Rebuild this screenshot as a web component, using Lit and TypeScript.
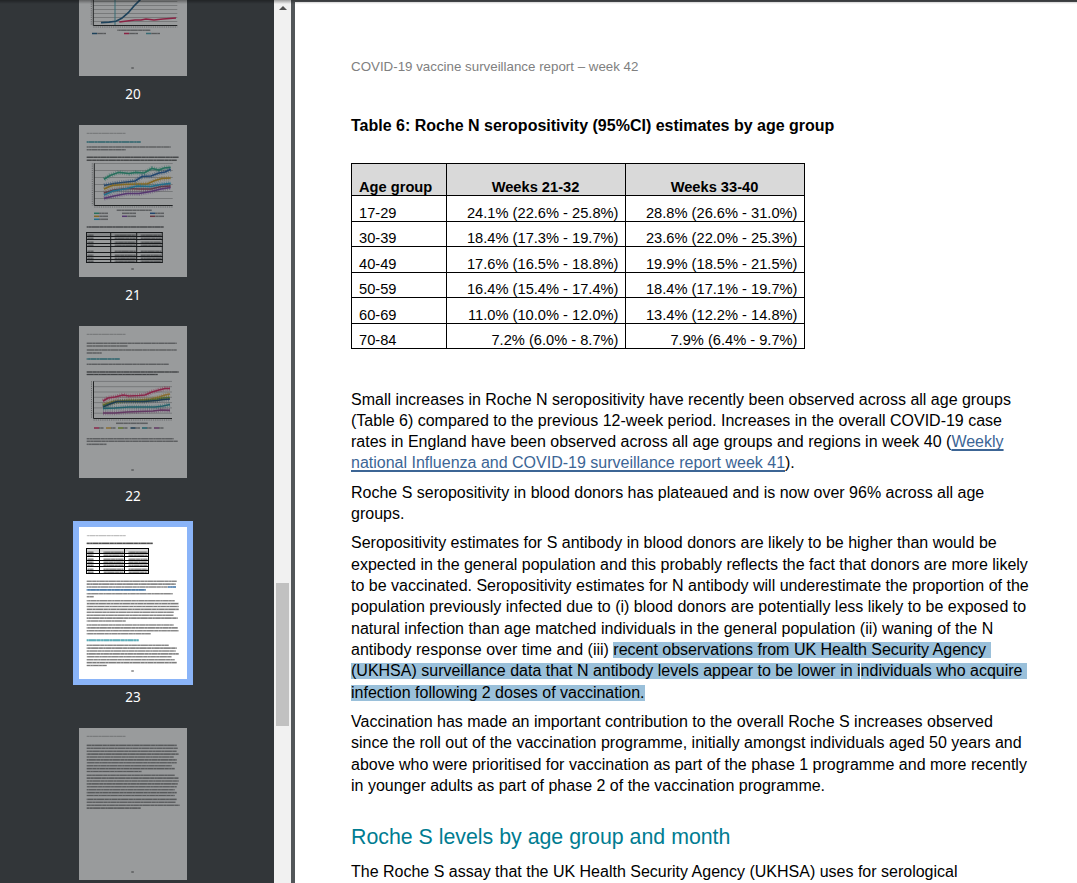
import { LitElement, html, svg, css } from 'lit';
import { customElement, property } from 'lit/decorators.js';

type Line = [x: number, y: number, width: number, kind?: string];
type Series = [color: string, points: string];

interface Chart {
  left: number;
  right: number;
  top: number;
  bottom: number;
  step: number;
  series: Series[];
  legend: [x: number, y: number, color: string][];
}

interface Grid {
  cols: number[];
  rows: number[];
}

interface Thumb {
  page: number;
  lines: Line[];
  chart?: Chart;
  grid?: Grid;
}

// a run of text lines of the given widths, evenly spaced
const block = (y: number, pitch: number, widths: number[]): Line[] =>
  widths.map((w, i) => [7.7, y + i * pitch, w]);

const THUMBS: Thumb[] = [
  {
    page: 20,
    lines: [[38.3, 106.3, 33]],
    chart: {
      left: 14.3,
      right: 98.3,
      top: 40,
      bottom: 101.5,
      step: 4,
      series: [
        ['#0b4f7d', '22,98.7 30,98.2 37,97.3 42.7,94.3 49.3,88.7 55,82 61,76 70,66'],
        ['#e0104e', '40.3,98 48,97 56,96 62,96 67,95 75,96 84,95 97,94'],
      ],
      legend: [
        [13, 109.5, '#0b4f7d'],
        [45, 109.5, '#e0104e'],
        [67, 109.5, '#3a9fae'],
      ],
    },
  },
  {
    page: 21,
    lines: [
      [7.7, 8.3, 39, 'faint'],
      [7.7, 17, 54, 'teal'],
      [7.7, 22, 84],
      [7.7, 24.7, 39],
      [7.7, 32.3, 92, 'bold'],
      [7.7, 35.2, 90, 'bold'],
      [37.7, 85.3, 35],
      [7.7, 102, 77, 'bold'],
    ],
    chart: {
      left: 15.3,
      right: 93.7,
      top: 38.3,
      bottom: 80.5,
      step: 7,
      series: [
        ['#1fa882', '25,54.3 31,50.5 40,47.3 50,48.5 57,47.3 65,48 73,43.5 80,45 85,43 91.7,42.3'],
        ['#1558a3', '25,60.5 35,58.5 48,57 56,56 63,51.5 72,51 80,48 86,47 91.7,44.3'],
        ['#9c3848', '25,68 35,65 48,63.5 60,64 72,64 82,61.5 91.7,61'],
        ['#d39c13', '25,64 33,60.5 45,59.5 58,59 68,59 76,55.5 83,53.5 91.7,53'],
        ['#18a4d8', '25,70 34,66 48,63.5 58,61 72,61.5 82,59.5 91.7,58.3'],
        ['#7b3ba8', '25,73.3 35,71 48,68.5 60,68.5 72,66.5 82,64 91.7,62.5'],
      ],
      legend: [
        [15, 88.3, '#1fa882'],
        [43, 88.3, '#888888'],
        [71, 88.3, '#1558a3'],
        [15, 91.3, '#d39c13'],
        [43, 91.3, '#7b3ba8'],
        [71, 91.3, '#9c3848'],
        [15, 94.3, '#18a4d8'],
      ],
    },
    grid: {
      cols: [7.5, 31.7, 57.7, 83.3],
      rows: [107.5, 111.5, 114.5, 118.5, 121.5, 127.5, 131.5, 134.5, 137.5],
    },
  },
  {
    page: 22,
    lines: [
      [7.7, 8.3, 39, 'faint'],
      [7.7, 17.3, 90],
      [7.7, 20, 41],
      [7.7, 24, 90],
      [7.7, 27, 15],
      [7.7, 33, 33, 'teal'],
      [7.7, 38.3, 82],
      [7.7, 46, 92, 'bold'],
      [7.7, 48.5, 71, 'bold'],
      [37, 97.3, 32],
      [7.7, 112.7, 87],
      [7.7, 115.3, 91],
      [7.7, 118.3, 20],
    ],
    chart: {
      left: 14.5,
      right: 93,
      top: 55.3,
      bottom: 92.5,
      step: 5.3,
      series: [
        ['#e01a5c', '24,75 29,72 36,71 44,69 50,70 60,69.5 66,69 73,66 80,64 86,62.5 91,62.5'],
        ['#e6a72c', '24,79 34,75.5 48,74.5 60,74 72,73 80,71 86,69 91,68'],
        ['#88ad1d', '24,79.5 36,76 50,75 64,75 76,73.5 84,72 91,71.5'],
        ['#0c456b', '24,81 31,78 38,75.5 50,75.5 65,75.5 78,74.5 84,73.5 91,73'],
        ['#168c9c', '24,82.5 36,82 50,81 64,81 76,81 84,80 91,78.5'],
        ['#923c8c', '24,87 36,87 48,86 60,85.5 74,85 82,84 91,84.3'],
      ],
      legend: [
        [15, 102, '#e01a5c'],
        [27, 102, '#e6a72c'],
        [39, 102, '#88ad1d'],
        [51.5, 102, '#0c456b'],
        [63, 102, '#168c9c'],
        [75, 102, '#923c8c'],
      ],
    },
  },
  {
    page: 23,
    lines: [
      [7.7, 8.7, 39, 'faint'],
      [7.7, 16.4, 66, 'bold'],
      ...block(54.2, 2.9, [90, 89]),
      [7.7, 60, 81],
      [89, 60, 8, 'link'],
      [7.7, 62.9, 59, 'link'],
      ...block(66.8, 2.9, [86, 7]),
      ...block(73.7, 2.9, [88, 92, 92, 92, 87, 87, 91, 39]),
      ...block(98, 2.9, [87, 91, 92, 64]),
      [7.7, 113.3, 52, 'teal'],
      ...block(118.2, 2.9, [82, 90, 89, 92, 85, 88, 90, 20]),
    ],
    grid: {
      cols: [7.5, 20.5, 45.5, 69.5],
      rows: [21.5, 26.5, 29.5, 33.5, 36.5, 39.5, 43.5, 46.5],
    },
  },
  {
    page: 24,
    lines: [
      [7.7, 8.3, 39, 'faint'],
      ...block(17.4, 2.9, [90, 91, 90, 92, 87, 90, 90, 85, 88, 55]),
      ...block(47.2, 2.9, [88, 92, 92, 91, 90, 88, 90, 88]),
      ...block(71.4, 2.9, [90, 89, 93, 54]),
    ],
  },
];

const ROWS = [
  ['17-29', '24.1% (22.6% - 25.8%)', '28.8% (26.6% - 31.0%)'],
  ['30-39', '18.4% (17.3% - 19.7%)', '23.6% (22.0% - 25.3%)'],
  ['40-49', '17.6% (16.5% - 18.8%)', '19.9% (18.5% - 21.5%)'],
  ['50-59', '16.4% (15.4% - 17.4%)', '18.4% (17.1% - 19.7%)'],
  ['60-69', '11.0% (10.0% - 12.0%)', '13.4% (12.2% - 14.8%)'],
  ['70-84', '7.2% (6.0% - 8.7%)', '7.9% (6.4% - 9.7%)'],
];

@customElement('page-thumb')
export class PageThumb extends LitElement {
  @property({ attribute: false }) thumb!: Thumb;

  static styles = css`
    :host {
      display: block;
      width: 108px;
      height: 152px;
    }

    svg {
      display: block;
    }

    .line {
      stroke: #000;
      stroke-width: 1.6;
      stroke-opacity: 0.3;
    }

    .line.words {
      stroke-width: 1.1;
      stroke-dasharray: 3.7 0.8 1.9 0.6 5.3 0.7 2.6 0.6 7.1 0.8;
    }

    .line.faint {
      stroke-width: 1;
      stroke-opacity: 0.17;
    }

    .line.bold {
      stroke-opacity: 0.45;
    }

    .line.teal {
      stroke: #007c91;
      stroke-width: 1.9;
      stroke-opacity: 0.4;
    }

    .line.link {
      stroke: #1c5a96;
      stroke-opacity: 0.6;
    }

    .rule {
      stroke: #777;
      stroke-width: 0.5;
    }

    .axis {
      stroke: #111;
      stroke-width: 1;
      fill: none;
    }

    .ticks {
      stroke: #333;
      stroke-width: 1;
      stroke-dasharray: 1.2 1;
      opacity: 0.5;
    }

    .series {
      fill: none;
      stroke-width: 1.7;
    }

    .bars {
      fill: none;
      stroke-width: 4.6;
      stroke-dasharray: 1 1.2;
      opacity: 0.45;
    }

    .cell {
      stroke: #000;
      stroke-width: 1;
    }
  `;

  renderLine([x, y, width, kind = '']: Line) {
    return svg`
      <line class="line ${kind}" x1=${x} x2=${x + width} y1=${y} y2=${y} />
      <line class="line words ${kind}" x1=${x} x2=${x + width} y1=${y} y2=${y}
        stroke-dashoffset=${(y * 7) % 19} />
    `;
  }

  renderChart(c: Chart) {
    const rules: number[] = [];
    for (let y = c.bottom - c.step; y >= c.top - 1; y -= c.step) {
      rules.push(y);
    }
    return svg`
      ${rules.map((y) => svg`<line class="rule" x1=${c.left} x2=${c.right} y1=${y} y2=${y} />`)}
      <line class="ticks" x1=${c.left - 2} x2=${c.left - 2} y1=${c.top} y2=${c.bottom} />
      <line class="ticks" x1=${c.left} x2=${c.right} y1=${c.bottom + 1.5} y2=${c.bottom + 1.5} />
      ${this.thumb.page === 20
        ? svg`<line stroke="#3a9fae" x1="36" x2="36" y1=${c.top} y2=${c.bottom} />`
        : null}
      ${c.series.map(
        ([color, points]) => svg`
          ${this.thumb.page === 20
            ? null
            : svg`<polyline class="bars" stroke=${color} points=${points} />`}
          <polyline class="series" stroke=${color} points=${points} />
        `
      )}
      <path class="axis" d="M${c.left} ${c.top}V${c.bottom}H${c.right}" />
      ${c.legend.map(
        ([x, y, color]) => svg`
          <line stroke=${color} stroke-width="1.5" x1=${x} x2=${x + 5} y1=${y} y2=${y} />
          ${this.renderLine([x + 5, y, this.thumb.page === 22 ? 4.5 : 9])}
        `
      )}
    `;
  }

  renderGrid({ cols, rows }: Grid) {
    const right = cols[cols.length - 1];
    const bottom = rows[rows.length - 1];
    return svg`
      <rect x=${cols[0]} y=${rows[0]} width=${right - cols[0]} height=${rows[1] - rows[0]} fill="#d9d9d9" />
      ${rows.slice(1).map((y) =>
        cols.slice(0, -1).map((x, i) =>
          this.renderLine(
            i === 0 ? [x + 1, y - 1.3, 6] : [x + 4, y - 1.3, cols[i + 1] - x - 5]
          )
        )
      )}
      ${rows.map((y) => svg`<line class="cell" x1=${cols[0] - 0.5} x2=${right + 0.5} y1=${y} y2=${y} />`)}
      ${cols.map((x) => svg`<line class="cell" x1=${x} x2=${x} y1=${rows[0]} y2=${bottom} />`)}
    `;
  }

  render() {
    const { lines, chart, grid } = this.thumb;
    return html`
      <svg width="108" height="152" viewBox="0 0 108 152">
        <rect width="108" height="152" fill="#fff" />
        ${lines.map((l) => this.renderLine(l))}
        ${chart ? this.renderChart(chart) : null}
        ${grid ? this.renderGrid(grid) : null}
        ${this.renderLine([52.3, 144, 2.5])}
      </svg>
    `;
  }
}

@customElement('app-root')
export class AppRoot extends LitElement {
  static styles = css`
    :host {
      display: flex;
      position: relative;
      width: 1077px;
      height: 883px;
      overflow: hidden;
      background: #525659;
      font-family: 'Liberation Sans', Arial, sans-serif;
    }

    .shade {
      position: absolute;
      inset: 0 0 auto 0;
      height: 4px;
      background: linear-gradient(rgba(0, 0, 0, 0.35), transparent);
    }

    .thumbs {
      box-sizing: border-box;
      flex: none;
      display: flex;
      flex-direction: column;
      align-items: center;
      width: 274px;
      height: 883px;
      padding-right: 8px;
      overflow: hidden;
      background: #323639;
    }

    .item {
      flex: none;
      height: 201px;
      display: flex;
      flex-direction: column;
      align-items: center;
    }

    .item:first-child {
      margin-top: -76px;
    }

    .item page-thumb {
      opacity: 0.5;
    }

    .item.selected {
      margin: -6px 0 6px;
    }

    .item.selected page-thumb {
      opacity: 1;
      border: 6px solid #8ab4f8;
    }

    .number {
      margin-top: 10px;
      color: #fff;
      font: 13.5px/16px 'Noto Sans', 'Open Sans', sans-serif;
    }

    .item.selected .number {
      margin-top: 4px;
    }

    .scrollbar {
      flex: none;
      display: flex;
      flex-direction: column;
      align-items: center;
      width: 17px;
      background: #f1f1f1;
    }

    .arrow {
      margin-top: 6px;
      border: 4px solid transparent;
      border-top: none;
      border-bottom: 4px solid #505050;
    }

    .handle {
      width: 13px;
      height: 143px;
      margin-top: 573px;
      background: #c1c1c1;
    }

    .page {
      flex: none;
      box-sizing: border-box;
      width: 794px;
      height: 1123px;
      margin: 2px 0 0 4px;
      padding: 57px 0 0 56px;
      background: #fff;
      color: #000;
      font-size: 16px;
      line-height: 21.33px;
      white-space: nowrap;
    }

    .running {
      color: #808080;
      font-size: 13.33px;
      line-height: 16px;
    }

    .caption {
      margin: 41px 0 0;
      font-size: 16px;
      line-height: 20px;
    }

    .table {
      display: grid;
      grid-template-columns: 95px 179px 179px;
      grid-template-rows: 32px 26px 25px 26px 25px 26px 25px;
      width: 453px;
      margin: 27px 0 39.5px;
      border: solid #000;
      border-width: 1px 0 0 1px;
      font-size: 14.67px;
      line-height: 16px;
    }

    .cell {
      display: flex;
      align-items: flex-end;
      justify-content: flex-end;
      padding: 0 6.5px 0 7px;
      border: solid #000;
      border-width: 0 1px 1px 0;
    }

    .cell.head {
      justify-content: center;
      padding: 0 7px 0 6px;
      background: #d9d9d9;
      font-weight: bold;
    }

    .cell.age {
      justify-content: flex-start;
      padding-left: 7px;
    }

    p {
      margin: 0 0 8px;
    }

    a {
      color: #3c6595;
      text-decoration: underline;
      text-decoration-thickness: 2px;
      text-decoration-skip-ink: none;
      text-underline-offset: 2px;
    }

    .mark {
      position: relative;
      display: inline-block;
      height: 16px;
      line-height: 16px;
      background: #9ac0da;
      vertical-align: baseline;
    }

    .mark.trail {
      padding-right: 5px;
    }

    .mark.seam {
      border-left: 1px solid #fff;
      margin-left: -1px;
    }

    h2 {
      margin: 26.5px 0 10.4px;
      color: #007c91;
      font-size: 21.33px;
      font-weight: normal;
      line-height: 28px;
    }
  `;

  renderThumb(thumb: Thumb, last: boolean) {
    return html`
      <div class="item ${thumb.page === 23 ? 'selected' : ''}">
        <page-thumb .thumb=${thumb}></page-thumb>
        ${last ? null : html`<div class="number">${thumb.page}</div>`}
      </div>
    `;
  }

  render() {
    return html`
      <div class="thumbs">
        ${THUMBS.map((t, i) => this.renderThumb(t, i === THUMBS.length - 1))}
      </div>
      <div class="scrollbar">
        <div class="arrow"></div>
        <div class="handle"></div>
      </div>
      <div class="page">
        <div class="running">COVID-19 vaccine surveillance report – week 42</div>
        <h3 class="caption">Table 6: Roche N seropositivity (95%CI) estimates by age group</h3>
        <div class="table">
          <div class="cell head age">Age group</div>
          <div class="cell head">Weeks 21-32</div>
          <div class="cell head">Weeks 33-40</div>
          ${ROWS.map((row) =>
            row.map((text, i) => html`<div class="cell ${i === 0 ? 'age' : ''}">${text}</div>`)
          )}
        </div>
        <p>
          Small increases in Roche N seropositivity have recently been observed across all age groups<br />
          (Table 6) compared to the previous 12-week period. Increases in the overall COVID-19 case<br />
          rates in England have been observed across all age groups and regions in week 40 (<a>Weekly<br />
          national Influenza and COVID-19 surveillance report week 41</a>).
        </p>
        <p>
          Roche S seropositivity in blood donors has plateaued and is now over 96% across all age<br />
          groups.
        </p>
        <p>
          Seropositivity estimates for S antibody in blood donors are likely to be higher than would be<br />
          expected in the general population and this probably reflects the fact that donors are more likely<br />
          to be vaccinated. Seropositivity estimates for N antibody will underestimate the proportion of the<br />
          population previously infected due to (i) blood donors are potentially less likely to be exposed to<br />
          natural infection than age matched individuals in the general population (ii) waning of the N<br />
          antibody response over time and (iii) <span class="mark trail">recent observations from UK Health Security Agency</span><br />
          <span class="mark">(UKHSA) surveillance data that N antibody levels appear to be lower in i</span><span class="mark seam trail">ndividuals who acquire</span><br />
          <span class="mark">infection following 2 doses of vaccination.</span>
        </p>
        <p>
          Vaccination has made an important contribution to the overall Roche S increases observed<br />
          since the roll out of the vaccination programme, initially amongst individuals aged 50 years and<br />
          above who were prioritised for vaccination as part of the phase 1 programme and more recently<br />
          in younger adults as part of phase 2 of the vaccination programme.
        </p>
        <h2>Roche S levels by age group and month</h2>
        <p>The Roche S assay that the UK Health Security Agency (UKHSA) uses for serological</p>
      </div>
      <div class="shade"></div>
    `;
  }
}
